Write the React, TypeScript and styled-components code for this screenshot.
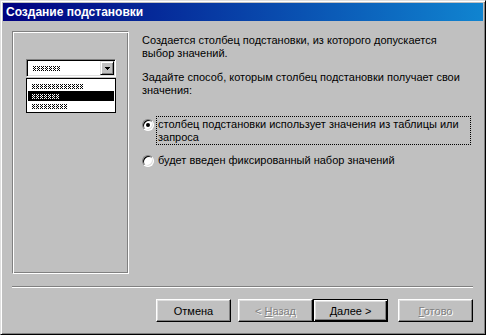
import React from "react";
import styled, { createGlobalStyle } from "styled-components";

const Global = createGlobalStyle`
  html, body { margin: 0; padding: 0; background: #c0c0c0; }
  body { font-family: "Liberation Sans", Arial, sans-serif; font-size: 11px; color: #000; }
  * { box-sizing: border-box; }
`;

const Window = styled.div`
  width: 486px;
  height: 335px;
  background: #c0c0c0;
  border: 1px solid;
  border-color: #dfdfdf #000 #000 #dfdfdf;
  box-shadow: inset 1px 1px #fff, inset -1px -1px #808080;
  padding: 2px;
  display: flex;
  flex-direction: column;
`;

const TitleBar = styled.div`
  height: 18px;
  flex: none;
  background: linear-gradient(90deg, #000080 0%, #1084d0 100%);
  color: #fff;
  font-family: "Liberation Sans", Arial, sans-serif;
  font-weight: bold;
  font-size: 12px;
  line-height: 18px;
  padding-left: 3px;
  white-space: nowrap;
`;

const Body = styled.div`
  flex: 1;
  display: flex;
  flex-direction: column;
  padding: 10px 10px 0 9px;
`;

const Main = styled.div`
  display: flex;
  gap: 13px;
`;

const Panel = styled.div`
  width: 117px;
  height: 243px;
  flex: none;
  border: 1px solid;
  border-color: #808080 #fff #fff #808080;
  box-shadow: inset 1px 1px #fff, inset -1px -1px #808080;
  padding: 27px 0 0 13px;
`;

const Combo = styled.div`
  width: 90px;
  height: 18px;
  background: #fff;
  border: 1px solid;
  border-color: #808080 #fff #fff #808080;
  box-shadow: inset 1px 1px #000, inset -1px -1px #dfdfdf;
  padding: 1px;
  display: flex;
  align-items: center;
`;

const ComboText = styled.div`
  flex: 1;
  padding-left: 5px;
  display: flex;
  align-items: center;
`;

const DropButton = styled.div`
  width: 14px;
  height: 14px;
  flex: none;
  background: #c0c0c0;
  border: 1px solid;
  border-color: #dfdfdf #000 #000 #dfdfdf;
  box-shadow: inset 1px 1px #fff, inset -1px -1px #808080;
  display: flex;
  align-items: center;
  justify-content: center;
`;

const List = styled.div`
  width: 90px;
  margin-top: 1px;
  background: #fff;
  border: 1px solid #000;
  padding: 2px 1px 1px 1px;
`;

const ListItem = styled.div<{ $selected?: boolean }>`
  height: 10px;
  padding-left: 4px;
  display: flex;
  align-items: center;
  background: ${(p) => (p.$selected ? "#000" : "transparent")};
`;

const Content = styled.div`
  flex: 1;
  padding-top: 3px;
  display: flex;
  flex-direction: column;
`;

const Para = styled.p<{ $top: number }>`
  margin: ${(p) => p.$top}px 0 0 0;
  line-height: 13px;
  white-space: nowrap;
`;

const Options = styled.div`
  margin-top: 19px;
  display: flex;
  flex-direction: column;
  gap: 7px;
`;

const OptionRow = styled.div`
  display: flex;
  align-items: flex-start;
`;

const Radio = styled.span<{ $checked?: boolean }>`
  width: 12px;
  height: 12px;
  flex: none;
  margin-top: 3px;
  border-radius: 50%;
  background: #fff;
  border: 1px solid;
  border-color: #808080 #fff #fff #808080;
  box-shadow: inset 1px 1px #000, inset -1px -1px #dfdfdf;
  display: flex;
  align-items: center;
  justify-content: center;
  &::after {
    content: "";
    width: 4px;
    height: 4px;
    border-radius: 50%;
    background: ${(p) => (p.$checked ? "#000" : "transparent")};
  }
`;

const Label = styled.span<{ $focused?: boolean }>`
  margin-left: 2px;
  width: 315px;
  padding: 1px 1px 0 1px;
  line-height: 13px;
  white-space: nowrap;
  border: 1px ${(p) => (p.$focused ? "dotted #000" : "solid transparent")};
`;

const Separator = styled.div`
  margin-top: 12px;
  height: 2px;
  border-top: 1px solid #808080;
  border-bottom: 1px solid #fff;
`;

const ButtonRow = styled.div`
  margin-top: 11px;
  display: flex;
  justify-content: flex-end;
`;

const Button = styled.button<{ $default?: boolean; $gap?: number }>`
  width: 75px;
  height: 23px;
  margin-left: ${(p) => p.$gap ?? 0}px;
  padding: 0;
  background: #c0c0c0;
  font-family: "Liberation Sans", Arial, sans-serif;
  font-size: 11px;
  color: #000;
  border: 1px solid;
  border-color: ${(p) => (p.$default ? "#000" : "#fff #000 #000 #fff")};
  box-shadow: ${(p) =>
    p.$default
      ? "inset 1px 1px #fff, inset -1px -1px #000, inset -2px -2px #808080, inset 2px 2px #dfdfdf"
      : "inset -1px -1px #808080, inset 1px 1px #dfdfdf"};
  &:disabled {
    color: #808080;
    text-shadow: 1px 1px #fff;
  }
`;

const Glyphs: React.FC<{ count: number; color?: string }> = ({ count, color = "#000" }) => {
  const rects: React.ReactNode[] = [];
  const pts = [
    [0, 0], [2, 0], [1, 1], [0, 2], [2, 2], [1, 3], [0, 4], [2, 4],
  ];
  for (let i = 0; i < count; i++) {
    pts.forEach(([x, y], j) =>
      rects.push(<rect key={`${i}-${j}`} x={i * 4 + x} y={y} width={1} height={1} fill={color} />)
    );
  }
  return (
    <svg width={count * 4 - 1} height={5} viewBox={`0 0 ${count * 4 - 1} 5`} shapeRendering="crispEdges">
      {rects}
    </svg>
  );
};

export default function App() {
  return (
    <>
      <Global />
      <Window>
        <TitleBar>Создание подстановки</TitleBar>
        <Body>
          <Main>
            <Panel>
              <Combo>
                <ComboText>
                  <Glyphs count={7} />
                </ComboText>
                <DropButton>
                  <svg width="5" height="3" viewBox="0 0 5 3" shapeRendering="crispEdges">
                    <rect x="0" y="0" width="5" height="1" fill="#000" />
                    <rect x="1" y="1" width="3" height="1" fill="#000" />
                    <rect x="2" y="2" width="1" height="1" fill="#000" />
                  </svg>
                </DropButton>
              </Combo>
              <List>
                <ListItem>
                  <Glyphs count={13} />
                </ListItem>
                <ListItem $selected>
                  <Glyphs count={7} color="#fff" />
                </ListItem>
                <ListItem>
                  <Glyphs count={9} />
                </ListItem>
              </List>
            </Panel>
            <Content>
              <Para $top={0}>
                Создается столбец подстановки, из которого допускается
                <br />
                выбор значений.
              </Para>
              <Para $top={11}>
                Задайте способ, которым столбец подстановки получает свои
                <br />
                значения:
              </Para>
              <Options>
                <OptionRow>
                  <Radio $checked />
                  <Label $focused>
                    столбец подстановки использует значения из таблицы или
                    <br />
                    запроса
                  </Label>
                </OptionRow>
                <OptionRow>
                  <Radio />
                  <Label>будет введен фиксированный набор значений</Label>
                </OptionRow>
              </Options>
            </Content>
          </Main>
          <Separator />
          <ButtonRow>
            <Button>Отмена</Button>
            <Button disabled $gap={7}>
              &lt; <u>Н</u>азад
            </Button>
            <Button $default>
              <u>Д</u>алее &gt;
            </Button>
            <Button disabled $gap={10}>
              <u>Г</u>отово
            </Button>
          </ButtonRow>
        </Body>
      </Window>
    </>
  );
}
